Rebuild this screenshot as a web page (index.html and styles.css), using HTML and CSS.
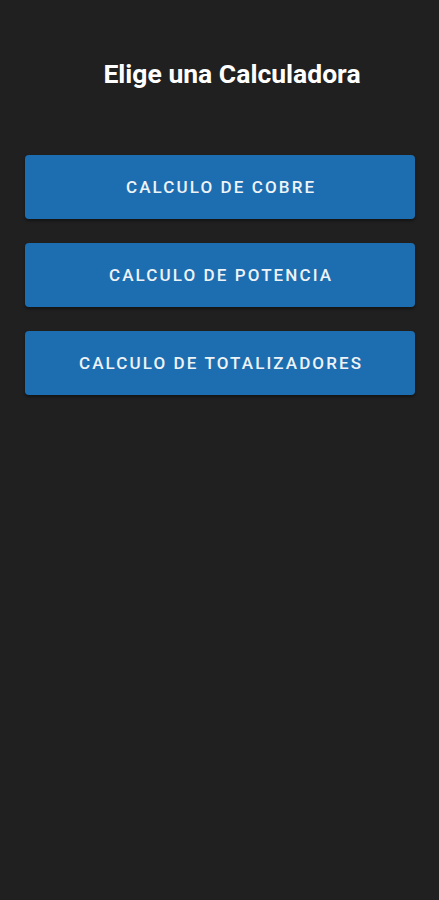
FILE: index.html
```html
<!DOCTYPE html>
<html lang="es">
<head>
<meta charset="utf-8">
<link rel="stylesheet" href="styles.css">
</head>
<body>
<main class="screen">
  <h1 class="title">Elige una Calculadora</h1>
  <div class="buttons">
    <button class="btn">CALCULO DE COBRE</button>
    <button class="btn">CALCULO DE POTENCIA</button>
    <button class="btn">CALCULO DE TOTALIZADORES</button>
  </div>
</main>
</body>
</html>
```
FILE: styles.css
```css
html, body {
  margin: 0;
  padding: 0;
  background: #202020;
}
.screen {
  width: 439px;
  height: 900px;
  box-sizing: border-box;
  padding: 58px 24px 0 25px;
  font-family: Roboto, "Liberation Sans", sans-serif;
}
.title {
  margin: 0 0 0 24px;
  text-align: center;
  color: #ffffff;
  font-size: 26.5px;
  font-weight: 700;
  line-height: 32px;
}
.buttons {
  margin-top: 65px;
  display: flex;
  flex-direction: column;
  gap: 24px;
}
.btn {
  height: 64px;
  border: none;
  border-radius: 4px;
  background: #1d6eb0;
  color: #eef3f8;
  font-family: Roboto, "Liberation Sans", sans-serif;
  font-size: 17px;
  font-weight: 500;
  letter-spacing: 2.1px;
  padding: 0 0 0 2.1px;
  box-shadow: 0 2px 3px rgba(0,0,0,0.4);
}
```
